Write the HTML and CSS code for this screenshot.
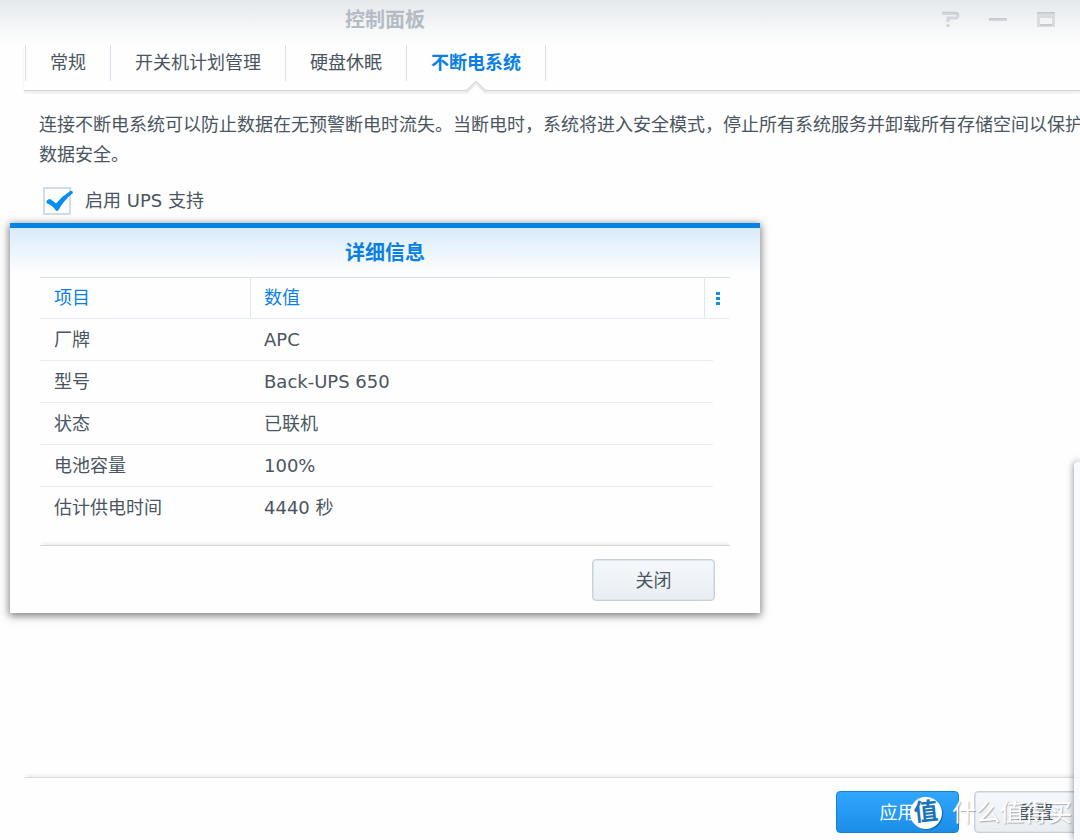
FILE: index.html
```html
<!DOCTYPE html>
<html lang="zh-CN">
<head>
<meta charset="utf-8">
<meta name="viewport" content="width=device-width, initial-scale=1">
<title>控制面板</title>
<link rel="stylesheet" href="styles.css">
</head>
<body>
<div class="window">
  <header class="titlebar">
    <h1 class="titlebar-title">控制面板</h1>
    <div class="titlebar-tools">
      <button class="tool" type="button" aria-label="帮助">
        <svg width="20" height="18" viewBox="0 0 20 18" fill="none"><path d="M2 3.500h13q3 0 3 2.200t-3 2.300H8v4" stroke="#d3d7db" stroke-width="3"/><path d="M2 2.500h13q3 0 3 2" stroke="#c6cbd0" stroke-width="1.500"/><path d="M6.500 15.500h3" stroke="#c6cbd0" stroke-width="2.500"/></svg>
      </button>
      <button class="tool" type="button" aria-label="最小化">
        <svg width="20" height="18" viewBox="0 0 20 18"><path d="M1 8h18v3H1z" fill="#d3d7db"/><path d="M1 8h18v1.500H1z" fill="#c6cbd0"/></svg>
      </button>
      <button class="tool" type="button" aria-label="最大化">
        <svg width="20" height="18" viewBox="0 0 20 18"><path fill="#d9dcdf" fill-rule="evenodd" d="M1 2h18v15H1zM4 8v6.500h12V8z"/><path d="M1 2h18v1.500H1zM4 14h12v1.500H4z" fill="#c3c8cc"/></svg>
      </button>
    </div>
  </header>

  <nav class="tabs" role="tablist">
    <button class="tab" type="button" role="tab">常规</button>
    <button class="tab" type="button" role="tab">开关机计划管理</button>
    <button class="tab" type="button" role="tab">硬盘休眠</button>
    <button class="tab tab-active" type="button" role="tab" aria-selected="true">不断电系统
      <svg class="tab-arrow" width="22" height="15" viewBox="0 0 22 15"><path d="M1 15v-5h1l9-8 9 8h1v5z" fill="#fefefe"/><path d="M0 12h2l9-9 9 9h2" fill="none" stroke="#efefef" stroke-width="3"/><path d="M0 10.500h2l9-9 9 9h2" fill="none" stroke="#d9dadb" stroke-width="1.500"/></svg>
    </button>
  </nav>

  <main class="content">
    <p class="intro">连接不断电系统可以防止数据在无预警断电时流失。当断电时，系统将进入安全模式，停止所有系统服务并卸载所有存储空间以保护<br>数据安全。</p>
    <label class="check-row">
      <span class="check">
        <input class="check-input" type="checkbox" checked>
        <svg class="check-mark" width="30" height="27" viewBox="0 0 30 27"><path d="M4 13.500Q6 11 8 12.500L13 16.500Q19 9 27 4.200 29.500 3 30 6 21 13 15.500 23q-1.500 2-3 0Q9 18 4.500 16.500 2.500 15.500 4 13.500z" fill="#058ff0"/></svg>
      </span>
      <span>启用 UPS 支持</span>
    </label>
  </main>

  <footer class="actions">
    <button class="btn btn-primary" type="button">应用</button>
    <button class="btn" type="button">重置</button>
  </footer>
</div>

<section class="dialog" role="dialog" aria-labelledby="dialog-title">
  <h2 class="dialog-title" id="dialog-title">详细信息</h2>
  <table class="details">
    <colgroup><col class="col-name"><col><col class="col-menu"><col class="col-edge"></colgroup>
    <thead>
      <tr>
        <th scope="col">项目</th>
        <th scope="col">数值</th>
        <th class="menu-cell" colspan="2"><button class="column-menu" type="button" aria-label="列菜单"><svg width="4" height="13" viewBox="0 0 4 13" fill="#168ce6"><path d="M0 0h4v3H0zM0 5h4v3H0zM0 10h4v3H0z"/></svg></button></th>
      </tr>
    </thead>
    <tbody>
      <tr><td>厂牌</td><td colspan="2">APC</td></tr>
      <tr><td>型号</td><td colspan="2">Back-UPS 650</td></tr>
      <tr><td>状态</td><td colspan="2">已联机</td></tr>
      <tr><td>电池容量</td><td colspan="2">100%</td></tr>
      <tr><td>估计供电时间</td><td colspan="2">4440 秒</td></tr>
    </tbody>
  </table>
  <div class="dialog-actions">
    <button class="btn" type="button">关闭</button>
  </div>
</section>

<aside class="side-panel"></aside>

<div class="watermark"><span class="watermark-badge">值</span><span>什么值得买</span></div>
</body>
</html>
```

FILE: styles.css
```css
* {
  box-sizing: border-box;
}

body {
  margin: 0;
  position: relative;
  min-height: 100vh;
  overflow: hidden;
  background: #fefefe;
  color: #4a555f;
  font: 18px/30px "DejaVu Sans", "Noto Sans CJK SC", sans-serif;
}

button {
  margin: 0;
  padding: 0;
  border: 0;
  background: none;
  color: inherit;
  font: inherit;
}

.window {
  display: flex;
  flex-direction: column;
  min-height: 100vh;
}

.titlebar {
  display: flex;
  align-items: flex-start;
  justify-content: space-between;
  height: 45px;
  padding: 5px 24px 0 345px;
  background: linear-gradient(#e5e9ed, #fefefe);
}

.titlebar-title {
  margin: 0;
  color: #b4bbc3;
  font-size: 20px;
  line-height: 30px;
}

.titlebar-tools {
  display: flex;
  gap: 28px;
  padding-top: 5px;
}

.tool,
.tool svg {
  display: block;
}

.tabs {
  display: flex;
  height: 46px;
  margin-left: 24px;
  padding-left: 1px;
  border-bottom: 1px solid #d4d6d7;
  box-shadow: 0 2px 2px #eaebeb;
}

.tab {
  position: relative;
  height: 36px;
  padding: 0 24px;
  border-left: 1px solid #d5e0eb;
  white-space: nowrap;
}

.tab:last-child {
  border-right: 1px solid #d5e0eb;
}

.tab-active {
  color: #0a7fe4;
  font-weight: bold;
}

.tab-arrow {
  position: absolute;
  top: 35px;
  left: 50%;
  margin-left: -11px;
}

.content {
  flex: 1;
  padding: 19px 0 0 39px;
}

.intro {
  margin: 0;
  white-space: nowrap;
}

.check-row {
  display: inline-flex;
  align-items: center;
  gap: 14px;
  margin-top: 16px;
  padding-left: 4px;
}

.check {
  position: relative;
  width: 28px;
  height: 28px;
}

.check-input {
  display: block;
  width: 28px;
  height: 28px;
  margin: 0;
  appearance: none;
  border: 2px solid #d3dce5;
  background: #fefefe;
}

.check-mark {
  position: absolute;
  top: 0;
  left: 0;
}

.actions {
  display: flex;
  justify-content: flex-end;
  gap: 15px;
  margin-left: 24px;
  margin-right: -17px;
  padding: 13px 0 7px;
  border-top: 1px solid #d9dbdc;
  box-shadow: 0 -4px 3px -2px #eceeee;
}

.btn {
  width: 123px;
  height: 42px;
  padding-top: 1px;
  border: 1px solid #c5d0dc;
  border-radius: 4px;
  background: linear-gradient(#f5f9fe, #e8edf2);
  box-shadow: inset 0 0 0 1px #dce4ec;
}

.btn-primary {
  border-color: #1680d2;
  background: linear-gradient(#31a6ff, #1b8fe8);
  box-shadow: none;
  color: #fff;
}

.dialog {
  position: absolute;
  top: 223px;
  left: 10px;
  width: 750px;
  padding: 10px 30px 12px;
  border-top: 5px solid #0485e6;
  background: linear-gradient(#d8ebfb, #fefefe 46px);
  box-shadow: 0 2px 8px 1px rgba(0, 0, 0, 0.5);
}

.dialog-title {
  margin: 0 0 9px;
  color: #0a7fe4;
  font-size: 20px;
  line-height: 30px;
  text-align: center;
}

.details {
  width: 100%;
  table-layout: fixed;
  border-collapse: separate;
  border-spacing: 0;
}

.col-name {
  width: 210px;
}

.col-menu {
  width: 9px;
}

.col-edge {
  width: 17px;
}

.details th,
.details td {
  height: 42px;
  padding: 0 14px;
  border-bottom: 1px solid #e6edf5;
  font-weight: normal;
  text-align: left;
}

.details th {
  border-top: 1px solid #d5e0eb;
  color: #0a7fe4;
}

.details th + th {
  padding-left: 13px;
  border-left: 1px solid #dfe8f2;
}

.details tr:last-child td {
  border-bottom: 0;
}

.details .menu-cell {
  padding: 0;
  text-align: center;
}

.column-menu {
  display: block;
  width: 100%;
}

.column-menu svg {
  display: block;
  margin: 0 auto;
}

.dialog-actions {
  display: flex;
  justify-content: flex-end;
  margin-top: 16px;
  padding: 13px 15px 0 0;
  border-top: 1px solid #d5d7d8;
  box-shadow: 0 -4px 3px -2px #ebecec;
}

.side-panel {
  position: absolute;
  top: 462px;
  right: 0;
  bottom: 0;
  width: 6px;
  border-radius: 4px 0 0 0;
  background: rgba(247, 250, 255, 0.9);
  box-shadow: 0 0 7px rgba(0, 0, 0, 0.5);
}

.watermark {
  position: absolute;
  right: 8px;
  bottom: 11px;
  display: flex;
  align-items: center;
  gap: 10px;
  color: #fff;
  font-size: 24px;
  line-height: 32px;
  text-shadow: 1px 1px 1px rgba(60, 70, 80, 0.4);
  white-space: nowrap;
}

.watermark-badge {
  width: 32px;
  height: 32px;
  border-radius: 50%;
  background: #fff;
  color: #1c74b8;
  font-size: 24px;
  font-weight: bold;
  line-height: 31px;
  text-align: center;
  text-shadow: none;
  transform: rotate(-6deg);
  box-shadow: 1px 1px 1px rgba(0, 60, 110, 0.5);
}
```
